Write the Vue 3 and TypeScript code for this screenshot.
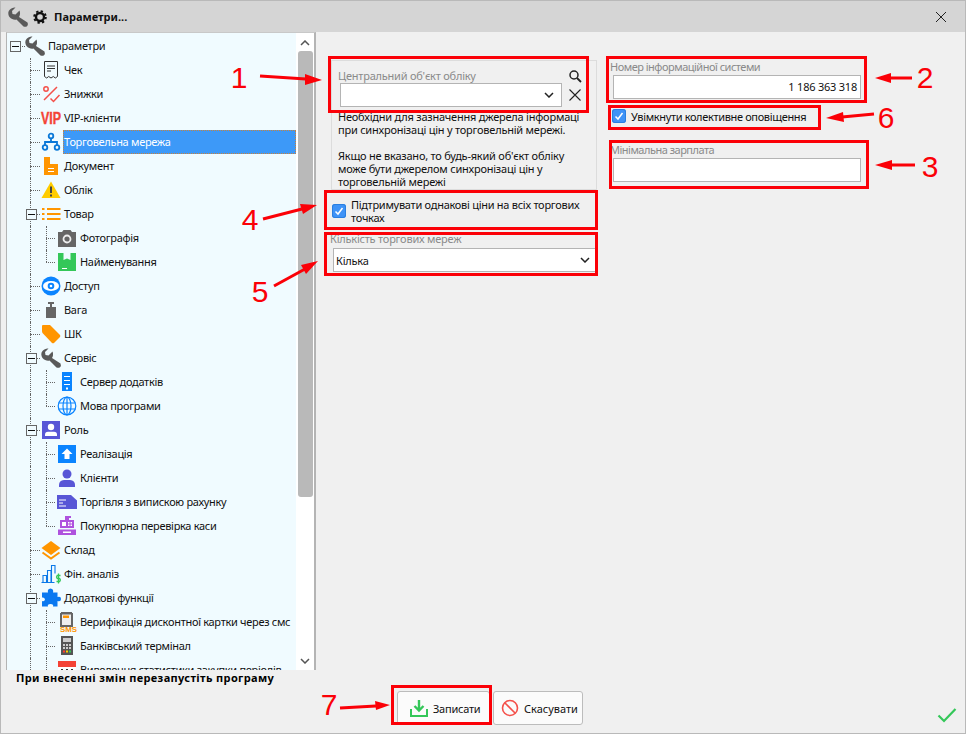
<script setup lang="ts">
type Row = { label: string; level: number; icon: string; expander?: boolean; selected?: boolean; v1: boolean; v2: boolean; v2half?: boolean }

const raw: [string, number, string, boolean?][] = [
  ['Параметри', 0, 'wrench', true],
  ['Чек', 1, 'receipt'],
  ['Знижки', 1, 'percent'],
  ['VIP-клієнти', 1, 'vip'],
  ['Торговельна мережа', 1, 'network'],
  ['Документ', 1, 'doc'],
  ['Облік', 1, 'warn'],
  ['Товар', 1, 'list', true],
  ['Фотографія', 2, 'camera'],
  ['Найменування', 2, 'box'],
  ['Доступ', 1, 'eye'],
  ['Вага', 1, 'weight'],
  ['ШК', 1, 'tag'],
  ['Сервіс', 1, 'wrench', true],
  ['Сервер додатків', 2, 'server'],
  ['Мова програми', 2, 'globe'],
  ['Роль', 1, 'role', true],
  ['Реалізація', 2, 'upload'],
  ['Клієнти', 2, 'person'],
  ['Торгівля з випискою рахунку', 2, 'invoice'],
  ['Покупюрна перевірка каси', 2, 'register'],
  ['Склад', 1, 'layers'],
  ['Фін. аналіз', 1, 'chart'],
  ['Додаткові функції', 1, 'puzzle', true],
  ['Верифікація дисконтної картки через смс', 2, 'sms'],
  ['Банківський термінал', 2, 'terminal'],
  ['Виведення статистики закупки періодів', 2, 'calendar'],
]

const rows: Row[] = raw.map(([label, level, icon, expander], i) => {
  const next = raw[i + 1]
  return {
    label,
    level,
    icon,
    expander: !!expander,
    selected: label === 'Торговельна мережа',
    v1: level > 0,
    v2: level === 2,
    v2half: level === 2 && !!next && next[1] !== 2,
  }
})

const marks = [
  { n: '1', x: 239, y: 88, a: '260,76 306,79', h: '305,74 322,80 305,85' },
  { n: '2', x: 925, y: 88, a: '912,78 890,78', h: '891,73 875,78 891,83' },
  { n: '3', x: 930, y: 177, a: '915,165 891,165', h: '892,160 875,165 892,170' },
  { n: '4', x: 250, y: 230, a: '263,219 302,209', h: '300,204 317,205 303,214' },
  { n: '5', x: 260, y: 302, a: '274,286 305,269', h: '301,265 318,261 306,274' },
  { n: '6', x: 886, y: 128, a: '874,114 842,117', h: '843,112 826,118 844,122' },
  { n: '7', x: 329, y: 715, a: '340,708 376,706', h: '375,701 390,705 376,710' },
]
</script>

<template>
  <div class="window">
    <header class="titlebar">
      <svg class="t-wrench" width="20" height="20" viewBox="0 0 20 20">
        <path fill="#5a5a5a" d="M7.500.5 4 4l.5 3 3 .5 4-4c1 2.500.5 5-.5 6.500l8.500 5.500q1 2.500-.5 3.800-1.500 1-3.500.2l-7-7C6.500 13 3.500 12.500 1.500 10 0 8-.2 4.500 1.500 3 3 1 5.500.2 7.500.5Z" />
      </svg>
      <svg class="t-gear" width="14" height="14" viewBox="0 0 14 14">
        <circle cx="7" cy="7" r="4" fill="none" stroke="#111" stroke-width="2.400" />
        <circle cx="7" cy="7" r="5.800" fill="none" stroke="#111" stroke-width="2" stroke-dasharray="2.300 2.250" />
      </svg>
      <span class="t-text">Параметри...</span>
      <svg class="t-close" width="12" height="12" viewBox="0 0 12 12">
        <path d="M1 1 11 11M11 1 1 11" stroke="#222" stroke-width="1" fill="none" />
      </svg>
    </header>

    <div class="main">
      <aside class="tree-panel">
        <div class="tree">
          <div v-for="row in rows" :key="row.label" class="row" :class="'lv' + row.level">
            <span v-if="row.v1" class="guide g1"></span>
            <span v-if="row.v2" class="guide g2" :class="{ half: row.v2half }"></span>
            <span v-if="row.level === 0" class="hline h0"></span>
            <span v-if="row.level === 1" class="hline h1"></span>
            <span v-if="row.level === 2" class="hline h2"></span>
            <span v-if="row.expander" class="exp"><i></i></span>
            <svg class="ico" width="20" height="20" viewBox="0 0 20 20">
              <path v-if="row.icon === 'wrench'" fill="#5a5a5a" d="M7.500.5 4 4l.5 3 3 .5 4-4c1 2.500.5 5-.5 6.500l8.500 5.500q1 2.500-.5 3.800-1.500 1-3.500.2l-7-7C6.500 13 3.500 12.500 1.500 10 0 8-.2 4.500 1.500 3 3 1 5.500.2 7.500.5Z" />
              <g v-else-if="row.icon === 'receipt'" fill="none" stroke="#333" stroke-width="1">
                <path d="M3.500 1.500h13v15l-2.200 1.500-2-1.500-2.300 1.500-2.300-1.500-2 1.500-2.200-1.500Z" />
                <path d="M6 6h8M6 8.500h8M6 11h4" />
              </g>
              <g v-else-if="row.icon === 'percent'" fill="none" stroke="#f4504a" stroke-width="1.500">
                <circle cx="5" cy="5" r="2.200" />
                <path d="M16 3 3 16M9.500 14.500l3 3 6-6.500" />
              </g>
              <text v-else-if="row.icon === 'vip'" class="vip" x="0" y="16" textLength="20" lengthAdjust="spacingAndGlyphs">VIP</text>
              <g v-else-if="row.icon === 'network'" fill="none" stroke="#0a78d8" stroke-width="1.800">
                <circle cx="10" cy="4" r="2.300" />
                <circle cx="4" cy="15.500" r="2.300" />
                <circle cx="16" cy="15.500" r="2.300" />
                <path d="M10 6.500V10M4 13v-3h12v3" />
              </g>
              <g v-else-if="row.icon === 'doc'">
                <path fill="#ff9500" d="M3 1h6v7h8v11H3Z" />
                <path stroke="#fff" d="M7 12.500h6M7 15.500h6" />
              </g>
              <g v-else-if="row.icon === 'warn'">
                <path fill="#ffcc00" d="M10 1.500 19.500 18H.5Z" />
                <path fill="#444" d="M9 6.500h2V13H9zM9 14.500h2v2H9z" />
              </g>
              <path v-else-if="row.icon === 'list'" stroke="#ff9500" stroke-width="2" d="M1 5h2.500M6 5h13.500M1 10h2.500M6 10h13.500M1 15h2.500M6 15h13.500" />
              <g v-else-if="row.icon === 'camera'">
                <path fill="#666" d="M1 4h4l1.500-2h7L15 4h4v15H1Z" />
                <circle cx="10" cy="11" r="3.500" fill="none" stroke="#eee" stroke-width="1.800" />
              </g>
              <g v-else-if="row.icon === 'box'">
                <path fill="#34c759" d="M1 1h5.500v7L10 6.500 13.500 8V1H19v18H1Z" />
                <path stroke="#fff" d="M5 16.500h5" />
              </g>
              <g v-else-if="row.icon === 'eye'">
                <circle cx="10" cy="10" r="9.500" fill="#0a84ff" />
                <ellipse cx="10" cy="10" rx="8" ry="5" fill="#fff" />
                <circle cx="10" cy="10" r="3.300" fill="#0a84ff" />
                <circle cx="10" cy="10" r="1.300" fill="#fff" />
              </g>
              <path v-else-if="row.icon === 'weight'" fill="#666" d="M7 2h6v2h-2v3h4v11H5V7h4V4H7Z" />
              <path v-else-if="row.icon === 'tag'" fill="#ff9500" d="M2 1h7l10 10q.6 1 0 2l-6 6q-1 .6-2 0L1.500 9Q1 8 1 7V2q0-1 1-1Z" />
              <g v-else-if="row.icon === 'server'">
                <path fill="#0a84ff" d="M5 0h10v19H5Z" />
                <path stroke="#fff" d="M7 4.500h6M7 8.500h6M7 12.500h6" />
                <path fill="#fff" d="M9 15.500h2v2H9z" />
              </g>
              <g v-else-if="row.icon === 'globe'" fill="none" stroke="#0a84ff" stroke-width="1.200">
                <circle cx="10" cy="10" r="8.800" />
                <ellipse cx="10" cy="10" rx="4" ry="8.800" />
                <path d="M10 1v18M1.500 7h17M1.500 13h17" />
              </g>
              <g v-else-if="row.icon === 'role'">
                <path fill="#5856d6" d="M1 1h18v18H1Z" />
                <circle cx="10" cy="7" r="3.200" fill="#fff" />
                <path fill="#fff" d="M4 16v-1.500q0-2.500 3-2.800h6q3 .3 3 2.800V16Z" />
              </g>
              <g v-else-if="row.icon === 'upload'">
                <path fill="#0a84ff" d="M1 1h18v18H1Z" />
                <path fill="#fff" d="M10 4.500 15.500 10H12.500v5h-5v-5H4.500Z" />
              </g>
              <g v-else-if="row.icon === 'person'" fill="#5856d6">
                <circle cx="10" cy="6" r="4.500" />
                <path d="M2 19v-2q0-4.500 5-5h6q5 .5 5 5v2Z" />
              </g>
              <g v-else-if="row.icon === 'invoice'">
                <path fill="#5856d6" d="M0 3h14l6 5.500V17H0Z" />
                <path stroke="#fff" d="M2 8h7M2 11h4M2 14h7" />
              </g>
              <g v-else-if="row.icon === 'register'">
                <path fill="#af52de" d="M8 0h6v2h-2v2h5v8H3V4h5V2H8ZM1 13.500h18V19H1Z" />
                <path fill="#fff" d="M5 6h4v4H5zM11 6h1.500v1.500H11zM13.500 6H15v1.500h-1.500zM11 8.500h1.500V10H11zM13.500 8.500H15V10h-1.500zM6 15.500h8v1.500H6z" />
              </g>
              <g v-else-if="row.icon === 'layers'">
                <path fill="#ff9500" d="M10 1 19.500 8 10 15 .5 8Z" />
                <path fill="none" stroke="#ff9500" stroke-width="2" d="M1.500 12.500 10 18.500l8.500-6" />
              </g>
              <g v-else-if="row.icon === 'chart'">
                <path fill="none" stroke="#0a78e8" stroke-width="1.100" d="M.5 18.500h13M2 18.500v-7h3.500v7M6.500 18.500V6.500H10v12M10.500 18.500V1.500H14v8" />
                <path fill="none" stroke="#34c759" stroke-width="1.300" d="M19.500 11.500h-3.300q-1.400 1.500 0 3h2.500q1.400 1.500 0 3h-3.200M17.500 9.500v10" />
              </g>
              <path v-else-if="row.icon === 'puzzle'" fill="#0a78f0" d="M7 4.500Q6 1 9.500 .5 13 1 12 4.500h4.500V9q3.500-1 3.500 2 0 3-3.500 2v5.500H12q1-2.500-2.500-2.500Q6 16 7 18.500H1V13q2.500 1 3-1.500Q3.500 9 1 9.500V4.500Z" />
              <g v-else-if="row.icon === 'sms'">
                <path fill="#666" d="M4 0h11v1h1v14H3V1h1Z" />
                <path fill="#eee" d="M5 2.500h9V13H5Z" />
                <path fill="#ff9500" d="M6 3.500h6V6H6z" />
                <text class="sms" x="3" y="19.500" textLength="17" lengthAdjust="spacingAndGlyphs">SMS</text>
              </g>
              <g v-else-if="row.icon === 'terminal'">
                <path fill="#555" d="M4 0h12v19H4Z" />
                <path fill="#ccc" d="M6 2h8v4H6zM6 8h2v2H6zM9 8h2v2H9zM12 8h2v2h-2zM6 11h2v2H6zM9 11h2v2H9zM12 11h2v2h-2z" />
                <path fill="#ff3b30" d="M6 14.500h2v2H6z" />
                <path fill="#ffcc00" d="M9 14.500h2v2H9z" />
                <path fill="#34c759" d="M12 14.500h2v2h-2z" />
              </g>
              <g v-else-if="row.icon === 'calendar'">
                <path fill="#f44336" d="M1 1h18v6H1Z" />
                <path fill="#fff" d="M1 7h18v12H1Z" />
                <path fill="#333" d="M4 9h2v2H4zM9 9h2v2H9zM14 9h2v2h-2z" />
              </g>
            </svg>
            <span class="label" :class="{ selected: row.selected }">{{ row.label }}</span>
          </div>
        </div>
        <div class="scrollbar">
          <svg class="arrow up" width="10" height="6" viewBox="0 0 10 6"><path d="M1 5 5 1l4 4" fill="none" stroke="#555" stroke-width="1.500" /></svg>
          <div class="thumb"></div>
          <svg class="arrow down" width="10" height="6" viewBox="0 0 10 6"><path d="M1 1l4 4 4-4" fill="none" stroke="#555" stroke-width="1.500" /></svg>
        </div>
      </aside>

      <section class="content">
        <div class="col-left">
          <div class="group">
            <div class="group-head">
              <div class="muted group-label">Центральний об'єкт обліку</div>
              <svg class="act" width="14" height="14" viewBox="0 0 14 14">
                <circle cx="6" cy="6" r="4" fill="none" stroke="#222" stroke-width="1.500" />
                <path d="M9 9l4 4" stroke="#222" stroke-width="1.800" />
              </svg>
            </div>
            <div class="group-select">
              <div class="select small">
                <svg width="10" height="6" viewBox="0 0 10 6"><path d="M1 1l4 4 4-4" fill="none" stroke="#222" stroke-width="1.500" /></svg>
              </div>
              <svg class="act" width="14" height="14" viewBox="0 0 14 14">
                <path d="M1.500 1.500l11 11M12.500 1.500l-11 11" stroke="#222" stroke-width="1.100" />
              </svg>
            </div>
            <p class="desc">Необхідни для зазначення джерела інформаці<br />при синхронізаці цін у торговельній мережі.<br /><br />Якщо не вказано, то будь-який об'єкт обліку<br />може бути джерелом синхронізаці цін у<br />торговельній мережі</p>
          </div>
          <div class="check-row wrap">
            <span class="checkbox"><svg width="14" height="14" viewBox="0 0 14 14"><path d="M3.500 7.500 6 10l4.500-6" fill="none" stroke="#fff" stroke-width="1.500" /></svg></span>
            <span>Підтримувати однакові ціни на всіх торгових<br />точках</span>
          </div>
          <div class="muted count-label">Кількість торгових мереж</div>
          <div class="select count">
            <span>Кілька</span>
            <svg width="10" height="6" viewBox="0 0 10 6"><path d="M1 1l4 4 4-4" fill="none" stroke="#222" stroke-width="1.500" /></svg>
          </div>
        </div>

        <div class="col-right">
          <div class="muted field-label">Номер інформаційної системи</div>
          <div class="input number">1 186 363 318</div>
          <div class="check-row single">
            <span class="checkbox"><svg width="14" height="14" viewBox="0 0 14 14"><path d="M3.500 7.500 6 10l4.500-6" fill="none" stroke="#fff" stroke-width="1.500" /></svg></span>
            <span>Увімкнути колективне оповіщення</span>
          </div>
          <div class="muted field-label salary">Мінімальна зарплата</div>
          <div class="input"></div>
        </div>
      </section>
    </div>

    <footer class="footer">
      <div class="note">При внесенні змін перезапустіть програму</div>
      <div class="actions">
        <button class="btn save">
          <svg width="20" height="20" viewBox="0 0 20 20">
            <path d="M2 11v7h16v-7" fill="none" stroke="#34c759" stroke-width="2" />
            <path d="M10 2v10M5.500 8l4.500 4.500L14.500 8" fill="none" stroke="#34c759" stroke-width="2.400" />
          </svg>
          <span>Записати</span>
        </button>
        <button class="btn cancel">
          <svg width="18" height="18" viewBox="0 0 18 18">
            <circle cx="9" cy="9" r="7.500" fill="none" stroke="#f4504a" stroke-width="1.600" />
            <path d="M4 4l10 10" stroke="#f4504a" stroke-width="1.600" />
          </svg>
          <span>Скасувати</span>
        </button>
        <svg class="ok" width="20" height="16" viewBox="0 0 20 16">
          <path d="M1.500 8.500 7 14 18.500 2" fill="none" stroke="#34c759" stroke-width="2.200" />
        </svg>
      </div>
    </footer>

    <div class="hl hl-1"></div>
    <div class="hl hl-2"></div>
    <div class="hl hl-6"></div>
    <div class="hl hl-3"></div>
    <div class="hl hl-4"></div>
    <div class="hl hl-5"></div>
    <div class="hl hl-7"></div>

    <svg class="marks" width="966" height="734" viewBox="0 0 966 734">
      <g v-for="m in marks" :key="m.n">
        <polyline :points="m.a" fill="none" stroke="#fb0007" stroke-width="3" />
        <polygon :points="m.h" fill="#fb0007" />
        <text class="mark-num" :x="m.x" :y="m.y">{{ m.n }}</text>
      </g>
    </svg>
  </div>
</template>

<style scoped>
.window {
  position: relative;
  width: 966px;
  height: 734px;
  box-sizing: border-box;
  border: 1px solid #b9b9b9;
  background: #f0f0f0;
  display: flex;
  flex-direction: column;
  overflow: hidden;
  font-family: "Noto Sans", "Liberation Sans", sans-serif;
  font-size: 11px;
  line-height: 13px;
  color: #111;
}
.titlebar {
  height: 31px;
  flex: none;
  background: #d5d5d5;
  display: flex;
  align-items: center;
}
.t-wrench { margin-left: 7px; }
.t-gear { margin-left: 5px; }
.t-text { margin-left: 7px; font-weight: 700; }
.t-close { margin-left: auto; margin-right: 18px; }
.main {
  height: 638px;
  flex: none;
  display: flex;
}
.tree-panel {
  margin-left: 5px;
  width: 310px;
  box-sizing: border-box;
  border-left: 1px solid #b4b4b4;
  border-top: 1px solid #c8c8c8;
  border-right: 2px solid #b4b4b4;
  display: flex;
  background: #fff;
  overflow: hidden;
}
.tree {
  width: 289px;
  flex: none;
  background: #f0fbff;
  padding-top: 1px;
  overflow: hidden;
  letter-spacing: -0.3px;
}
.row {
  position: relative;
  height: 24px;
  display: flex;
  align-items: center;
  gap: 2px;
}
.lv0 { padding-left: 18px; }
.lv1 { padding-left: 34px; }
.lv2 { padding-left: 50px; }
.ico { flex: none; overflow: visible; }
.label {
  flex: 1;
  min-width: 0;
  height: 24px;
  line-height: 24px;
  padding: 0 1px;
  white-space: nowrap;
  overflow: hidden;
  box-sizing: border-box;
}
.label.selected {
  background: #3d99f8;
  color: #fff;
  outline: 1px dotted #c8823c;
  outline-offset: -1px;
}
.guide {
  position: absolute;
  top: 0;
  height: 24px;
  border-left: 1px dotted #666;
}
.g1 { left: 23px; }
.g2 { left: 39px; }
.g2.half { height: 12px; }
.hline {
  position: absolute;
  top: 12px;
  border-top: 1px dotted #666;
}
.h0 { left: 12px; width: 6px; }
.h1 { left: 23px; width: 10px; }
.h2 { left: 39px; width: 9px; }
.exp {
  position: absolute;
  left: 19px;
  top: 7px;
  width: 9px;
  height: 9px;
  box-sizing: content-box;
  border: 1px solid #666;
  background: #f0fbff;
  z-index: 1;
}
.lv0 .exp { left: 3px; }
.exp i {
  position: absolute;
  left: 1px;
  right: 1px;
  top: 4px;
  height: 1px;
  background: #111;
}
.vip {
  font-family: "Liberation Sans", sans-serif;
  font-size: 16px;
  font-weight: 700;
  fill: #f44336;
  stroke: #f44336;
  stroke-width: 0.4px;
  letter-spacing: 0;
}
.sms {
  font-family: "Liberation Sans", sans-serif;
  font-size: 7px;
  font-weight: 700;
  fill: #ff9500;
  letter-spacing: 0;
}
.scrollbar {
  width: 18px;
  flex: none;
  display: flex;
  flex-direction: column;
  align-items: center;
  background: #fff;
}
.arrow.up { margin-top: 7px; }
.thumb {
  width: 15px;
  height: 446px;
  margin-top: 5px;
  background: #b9b9b9;
  border-radius: 3px;
}
.arrow.down { margin-top: auto; margin-bottom: 6px; }
.content {
  flex: 1;
  display: flex;
  align-items: flex-start;
  padding-left: 14px;
}
.muted { color: #8a8a8a; }
.col-left {
  width: 267px;
  margin-top: 28px;
  letter-spacing: -0.22px;
}
.group {
  margin-left: 1px;
  height: 130px;
  box-sizing: border-box;
  border: 1px solid #dcdcdc;
}
.group-head {
  display: flex;
  justify-content: space-between;
  align-items: center;
  padding: 7px 14px 0 6px;
  height: 22px;
  box-sizing: border-box;
}
.group-label { white-space: nowrap; }
.group-select {
  display: flex;
  align-items: center;
  justify-content: space-between;
  padding: 0 14px 0 8px;
}
.select {
  height: 24px;
  box-sizing: border-box;
  background: #fff;
  border: 1px solid #b4b4b4;
  display: flex;
  align-items: center;
  justify-content: space-between;
  padding: 0 7px 0 2px;
}
.select.small {
  width: 222px;
  justify-content: flex-end;
}
.desc {
  margin: 3px 0 0 6px;
  white-space: nowrap;
}
.check-row {
  display: flex;
  align-items: center;
  gap: 5px;
  white-space: nowrap;
}
.check-row.wrap {
  margin: 8px 0 0 2px;
  letter-spacing: -0.27px;
}
.check-row.single {
  margin: 10px 0 0 4px;
  height: 14px;
  letter-spacing: -0.35px;
}
.checkbox {
  width: 14px;
  height: 14px;
  flex: none;
  display: block;
  background: #3f93f7;
  border-radius: 3px;
  box-shadow: inset 0 0 0 1px #2a7fe0;
}
.checkbox svg { display: block; }
.count-label {
  margin-top: 8px;
  white-space: nowrap;
}
.select.count {
  margin: 3px 0 0 3px;
  width: 264px;
  padding-left: 2px;
  border-right: 0;
}
.col-right {
  width: 260px;
  margin: 28px 0 0 11px;
}
.field-label {
  padding-left: 2px;
  white-space: nowrap;
  letter-spacing: -0.5px;
}
.field-label.salary { margin-top: 20px; }
.input {
  margin: 2px 0 0 5px;
  width: 248px;
  height: 24px;
  box-sizing: border-box;
  background: #fff;
  border: 1px solid #b4b4b4;
}
.input.number {
  line-height: 22px;
  text-align: right;
  padding-right: 3px;
  letter-spacing: -0.22px;
}
.footer {
  flex: 1;
  display: flex;
  flex-direction: column;
}
.note {
  margin: 1px 0 0 15px;
  font-weight: 700;
  color: #000;
  white-space: nowrap;
  letter-spacing: 0.35px;
}
.actions {
  display: flex;
  align-items: flex-start;
  gap: 3px;
  margin-top: 7px;
  padding-left: 396px;
}
.btn {
  height: 34px;
  box-sizing: border-box;
  border: 1px solid #bcbcbc;
  border-radius: 3px;
  background: #fbfbfb;
  font: inherit;
  color: #111;
  display: flex;
  align-items: center;
  padding: 0;
}
.save { width: 93px; padding-left: 11px; gap: 4px; letter-spacing: -0.25px; }
.cancel { width: 90px; padding-left: 7px; gap: 5px; }
.ok { margin-left: auto; margin-right: 8px; margin-top: 16px; }
.hl {
  position: absolute;
  box-sizing: border-box;
  border: 3px solid #fb0007;
  pointer-events: none;
}
.hl-1 { left: 327px; top: 55px; width: 261px; height: 57px; }
.hl-2 { left: 605px; top: 55px; width: 261px; height: 47px; }
.hl-6 { left: 607px; top: 104px; width: 213px; height: 25px; }
.hl-3 { left: 608px; top: 139px; width: 260px; height: 49px; }
.hl-4 { left: 323px; top: 189px; width: 274px; height: 40px; }
.hl-5 { left: 323px; top: 231px; width: 274px; height: 44px; }
.hl-7 { left: 390px; top: 684px; width: 101px; height: 40px; }
.marks {
  position: absolute;
  left: -1px;
  top: -1px;
  pointer-events: none;
}
.mark-num {
  font-family: "Liberation Sans", sans-serif;
  font-size: 30px;
  fill: #fb0007;
  text-anchor: middle;
}
</style>
